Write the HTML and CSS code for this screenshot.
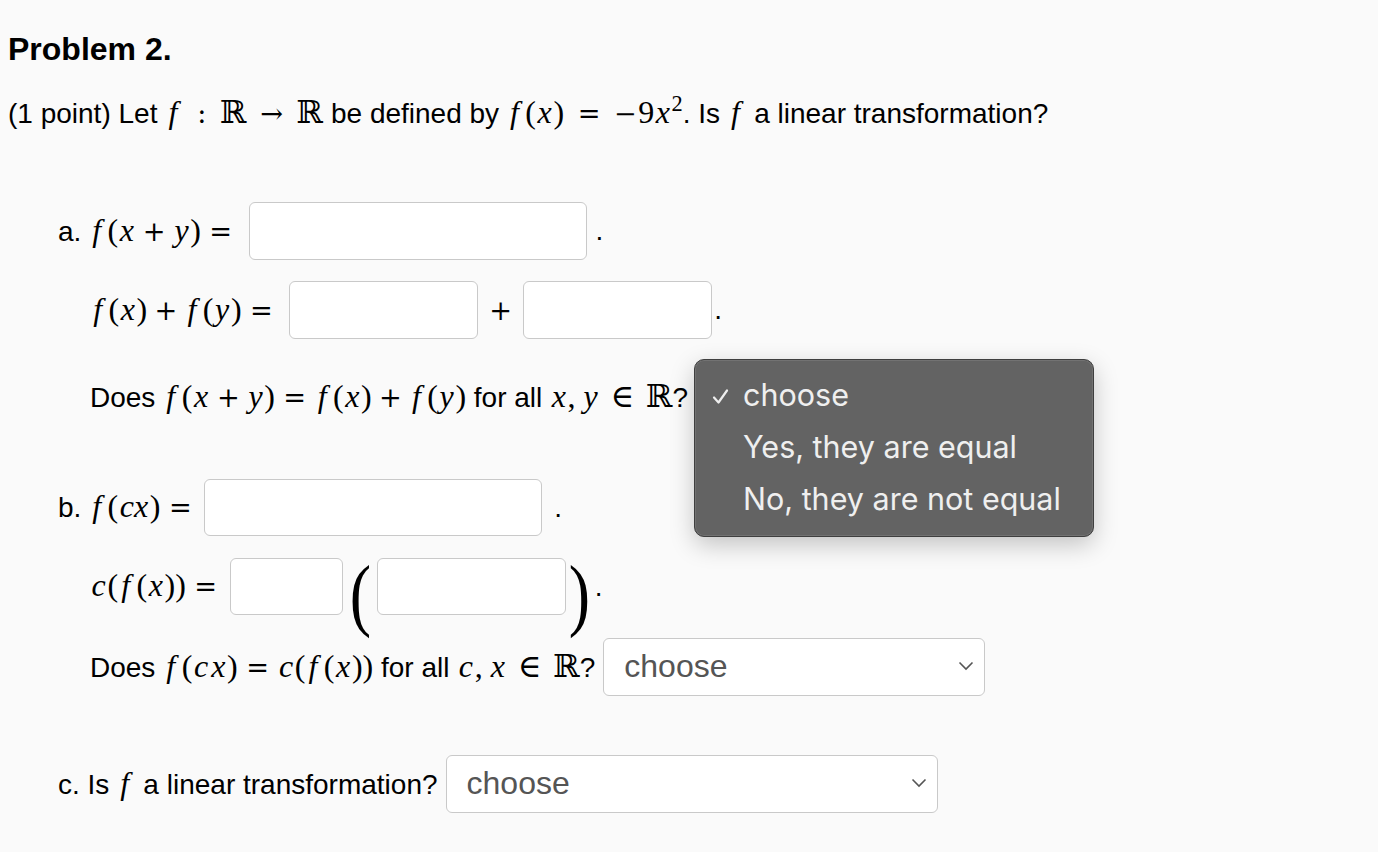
FILE: index.html
```html
<!DOCTYPE html>
<html lang="en">

<head>
	<meta charset="UTF-8">
	<title>Problem 2</title>
	<link rel="stylesheet" href="styles.css">
</head>

<body>

	<div class="problem">

		<h3 class="title">Problem 2.</h3>

		<p class="intro">(1 point) Let <span class="m"><span class="v f">f</span><span class="rel">:</span>ℝ<span class="rel">→</span>ℝ</span> be defined by <span class="m"><span class="v f">f</span>(<span class="v">x</span>)<span class="rel">=</span><span class="neg">−</span>9<span class="v">x</span><sup>2</sup></span>. Is <span class="m"><span class="v f">f</span></span> a linear transformation?</p>

		<!-- part a -->
		<div class="row part row-a">
			<span class="label">a. <span class="m"><span class="v f">f</span>(<span class="v">x</span><span class="bin">+</span><span class="v">y</span>)<span class="rel">=</span></span></span>
			<div class="box w-lg"></div>
			<span class="dot">.</span>
		</div>

		<div class="row sub row-a2">
			<span class="label"><span class="m"><span class="v f">f</span>(<span class="v">x</span>)<span class="bin">+</span><span class="v f">f</span>(<span class="v">y</span>)<span class="rel">=</span></span></span>
			<div class="box w-md"></div>
			<span class="plus"><span class="bin">+</span></span>
			<div class="box w-md"></div>
			<span class="dot tight">.</span>
		</div>

		<div class="row sub row-a3">
			<span class="label">Does <span class="m"><span class="v f">f</span>(<span class="v">x</span><span class="bin">+</span><span class="v">y</span>)<span class="rel">=</span><span class="v f">f</span>(<span class="v">x</span>)<span class="bin">+</span><span class="v f">f</span>(<span class="v">y</span>)</span> for all <span class="m"><span class="v">x</span>,<span class="thin"></span><span class="v">y</span><span class="rel in">∈</span>ℝ</span>?</span>
			<div class="select w-sel">
				<span class="covered">choose</span>
				<svg width="16" height="10" viewBox="0 0 16 10"><polyline points="1.5,1.5 8,8 14.5,1.5" fill="none" stroke="#555" stroke-width="1.6"/></svg>
			</div>

			<div class="popup">
				<div class="item">
					<svg class="tick" width="17" height="17" viewBox="0 0 17 17"><polyline points="2,9.5 6.5,14.5 15,2.5" fill="none" stroke="#eee" stroke-width="2.2" stroke-linecap="round" stroke-linejoin="round"/></svg>
					choose
				</div>
				<div class="item">Yes, they are equal</div>
				<div class="item">No, they are not equal</div>
			</div>
		</div>

		<!-- part b -->
		<div class="row part row-b">
			<span class="label">b. <span class="m"><span class="v f">f</span>(<span class="v">cx</span>)<span class="rel">=</span></span></span>
			<div class="box w-lg"></div>
			<span class="dot wide">.</span>
		</div>

		<div class="row sub row-b2">
			<span class="label"><span class="m"><span class="v">c</span>(<span class="v f">f</span>(<span class="v">x</span>))<span class="rel">=</span></span></span>
			<div class="box w-sm"></div>
			<span class="paren">(</span>
			<div class="box w-md"></div>
			<span class="paren close">)</span><span class="dot tight">.</span>
		</div>

		<div class="row sub row-b3">
			<span class="label">Does <span class="m"><span class="v f">f</span>(<span class="v">c</span><span class="v">x</span>)<span class="rel">=</span><span class="v">c</span>(<span class="v f">f</span>(<span class="v">x</span>))</span> for all <span class="m"><span class="v">c</span>,<span class="thin"></span><span class="v">x</span><span class="rel in">∈</span>ℝ</span>?</span>
			<div class="select w-sel">
				<span>choose</span>
				<svg width="16" height="10" viewBox="0 0 16 10"><polyline points="1.5,1.5 8,8 14.5,1.5" fill="none" stroke="#555" stroke-width="1.6"/></svg>
			</div>
		</div>

		<!-- part c -->
		<div class="row part row-c">
			<span class="label">c. Is <span class="m"><span class="v f">f</span></span> a linear transformation?</span>
			<div class="select w-sel-lg">
				<span>choose</span>
				<svg width="16" height="10" viewBox="0 0 16 10"><polyline points="1.5,1.5 8,8 14.5,1.5" fill="none" stroke="#555" stroke-width="1.6"/></svg>
			</div>
		</div>

	</div> <!-- end problem -->

</body>

</html>
```

FILE: styles.css
```css
body {
	background: #fafafa;
	color: #000;
	font: 28px/34px 'Liberation Sans', Arial, sans-serif;
	margin: 0;
}

.problem {
	padding: 0 8px;
}

.title {
	font-size: 32px;
	font-weight: 700;
	line-height: 38px;
	margin: 30px 0 0;
}

.intro {
	margin: 28px 0 0;
	white-space: nowrap;
}

/* math */
.m {
	font-family: 'Liberation Serif', 'DejaVu Serif', serif;
	font-size: 32px;
	line-height: 1;
	white-space: nowrap;
}

.v {
	font-style: italic;
	padding: 0 .05em;
}

.v.f {
	padding: 0 .2em 0 .1em;
}

.bin,
.rel {
	font-family: 'DejaVu Serif', serif;
	font-size: .85em;
}

.bin {
	margin: 0 .265em;
}

.rel {
	margin: 0 .31em;
}

.rel.in {
	font-size: 1em;
	margin: 0 .36em;
}

.intro .rel {
	margin: 0 .5em;
}

.neg {
	font-family: 'DejaVu Serif', serif;
	font-size: .85em;
	margin-right: .05em;
}

.thin {
	display: inline-block;
	width: .2em;
}

.m sup {
	font-size: .7em;
	line-height: 0;
	vertical-align: .55em;
}

/* rows */
.row {
	align-items: center;
	display: flex;
	height: 58px;
	position: relative;
	white-space: nowrap;
}

.part {
	padding-left: 50px;
}

.sub {
	padding-left: 82px;
}

.row-a {
	margin-top: 71px;
}

.row-a2 {
	margin-top: 21px;
}

.row-a3 {
	margin-top: 29px;
}

.row-b {
	margin-top: 53px;
	height: 57px;
}

.row-b2 {
	margin-top: 22px;
	height: 57px;
}

.row-b3 {
	margin-top: 23px;
}

.row-c {
	margin-top: 59px;
}

.label {
	margin-right: 8px;
}

.row-b .label,
.row-b2 .label {
	margin-right: 4px;
}

.row-a3 .label {
	margin-right: 14px;
}

.box {
	background: #fff;
	border: 1.5px solid #c9c9c9;
	border-radius: 6px;
	box-sizing: border-box;
	height: 100%;
}

.w-lg {
	width: 338px;
}

.w-md {
	width: 189px;
}

.w-sm {
	width: 113px;
}

.dot {
	margin-left: 9px;
}

.dot.tight {
	margin-left: 2px;
}

.dot.wide {
	margin-left: 12px;
}

.plus {
	font-size: 32px;
	margin: 0 4px;
}

.paren {
	font-family: 'Liberation Serif', serif;
	font-size: 80px;
	line-height: 1;
	margin: 14px 4px 0;
	transform: scaleX(.8);
}

.paren.close {
	margin: 14px 0 0 0;
}

.select {
	align-items: center;
	background: #fff;
	border: 1.5px solid #c9c9c9;
	border-radius: 6px;
	box-sizing: border-box;
	color: #555;
	display: flex;
	font-size: 32px;
	height: 100%;
	justify-content: space-between;
	padding: 0 10px 3px 20px;
}

.covered {
	visibility: hidden;
}

.w-sel {
	width: 382px;
}

.w-sel-lg {
	width: 492px;
}

/* open dropdown menu */
.popup {
	background: #636363;
	border: 1px solid #3f3f3f;
	border-radius: 10px;
	box-shadow: inset 0 0 0 1px rgba(255, 255, 255, .1), 0 8px 24px rgba(0, 0, 0, .22);
	box-sizing: border-box;
	color: #efefef;
	font: 30.5px/52px 'Inter', 'Open Sans', sans-serif;
	left: 686px;
	padding: 9px 0 11px 48px;
	position: absolute;
	top: -9px;
	width: 400px;
}

.item {
	position: relative;
}

.tick {
	left: -31px;
	position: absolute;
	top: 19px;
}
```
